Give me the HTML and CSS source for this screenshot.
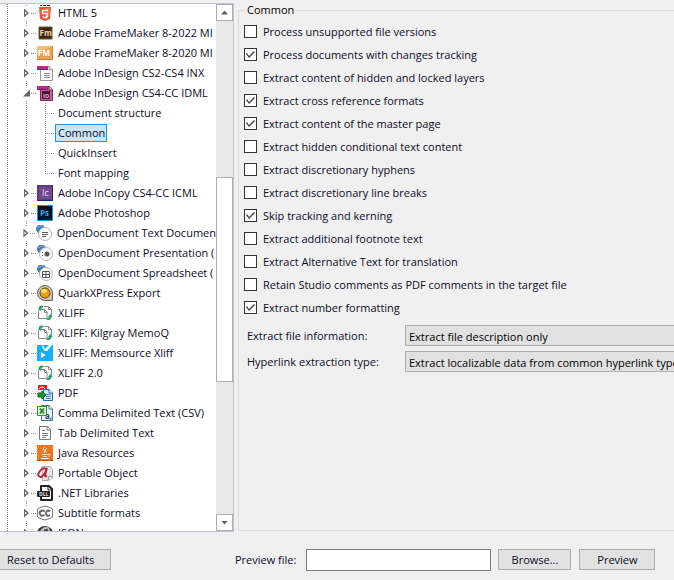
FILE: index.html
```html
<!DOCTYPE html>
<html lang="en">
<head>
<meta charset="utf-8">
<title>File types</title>
<link rel="stylesheet" href="styles.css">
</head>
<body>
<svg class="sprite" aria-hidden="true">
  <symbol id="xliff" viewBox="0 0 16 16">
    <path d="M7 1.500h4.500l3 3v6M11.500 1.500v3h3" fill="#fff" stroke="#888"/>
    <path d="M1.500 5.500v8h5M4.500 4.500h3l2.500 2.500v6.500H6M7.500 4.500v3H10" fill="none" stroke="#888"/>
    <path d="M2.500 4Q3 1 6 1.500M13.500 11.500q-.5 3-3.500 2.500" fill="none" stroke="#239a62" stroke-width="2"/>
    <path d="M1 3.500h4.500L3 6zM11 12l4.500 0-2-3z" fill="#239a62"/>
  </symbol>
  <symbol id="odf" viewBox="0 0 16 16">
    <circle cx="4.500" cy="4" r="4.500" fill="#3f7cba"/>
    <path d="M1 3q3-3 6-2" stroke="#86b0d9" fill="none"/>
    <circle cx="9" cy="9" r="6.500" fill="#fafafa" stroke="#b5b5b5"/>
  </symbol>
</svg>
<main class="workspace">
  <nav class="panel" aria-label="File types">
    <ul class="tree">
      <li><div class="row"><button class="toggle" aria-label="Expand"></button><svg class="icon" viewBox="0 0 16 16"><path d="M3 0h2v1H3zM6 0h3v1H6zM10 0h3v1h-3z" fill="#222"/><path d="M2 2h12l-1 12-5 2-5-2z" fill="#e5532d"/><path d="M8 3h5l-1 10-4 1z" fill="#f17843"/><path d="M11 5.500H5.500v3h5L10 12l-2 .7-2.500-.8" fill="none" stroke="#fff" stroke-width="1.500"/></svg><a href="#html">HTML 5</a></div></li>
      <li><div class="row"><button class="toggle" aria-label="Expand"></button><svg class="icon" viewBox="0 0 16 16"><path d="M2 2h13v12H2z" fill="#3c2815" stroke="#6e5529"/><text x="2.500" y="11" font-size="8" font-weight="bold" fill="#eed7a5">Fm</text></svg><a href="#fm22">Adobe FrameMaker 8-2022 MI</a></div></li>
      <li><div class="row"><button class="toggle" aria-label="Expand"></button><svg class="icon" viewBox="0 0 16 16"><path d="M0 1h15v14H0z" fill="#eaa14e"/><path d="M0 1h15L0 10z" fill="#f2bd75"/><path d="M0 14.500h15.500V1" stroke="#c9853a" fill="none"/><text x="1" y="11" font-size="8" font-weight="bold" fill="#fff">FM</text></svg><a href="#fm20">Adobe FrameMaker 8-2020 MI</a></div></li>
      <li><div class="row"><button class="toggle" aria-label="Expand"></button><svg class="icon" viewBox="0 0 16 16"><path d="M3.500 1.500h9l3 3v11h-12z" fill="#fafafa" stroke="#999"/><path d="M12 1v4h4" fill="#ddd" stroke="#999"/><path d="M0 1h11v4H0z" fill="#b42e87"/><path d="M0 4h11v1H0z" fill="#7d195b"/><path d="M7 8.500h6M7 10.500h6M7 12.500h6" stroke="#888"/></svg><a href="#inx">Adobe InDesign CS2-CS4 INX</a></div></li>
      <li class="open"><div class="row"><button class="toggle expanded" aria-label="Collapse"></button><svg class="icon" viewBox="0 0 16 16"><path d="M3.500 1.500h9l3 3v11h-12z" fill="#c868a2" stroke="#7a2458"/><path d="M12 1v4h4" fill="#edbdd9" stroke="#7a2458"/><path d="M0 1h11v4H0z" fill="#b42e87"/><path d="M0 4h11v1H0z" fill="#7d195b"/><path d="M5 6h8v8H5z" fill="#461335"/><text x="6" y="12.500" font-size="6" font-weight="bold" fill="#f2a8d6">ID</text></svg><a href="#idml">Adobe InDesign CS4-CC IDML</a></div>
        <ul class="branch">
          <li><a href="#structure">Document structure</a></li>
          <li><a href="#common" class="selected" aria-current="page">Common</a></li>
          <li><a href="#quick">QuickInsert</a></li>
          <li><a href="#fonts">Font mapping</a></li>
        </ul>
      </li>
      <li><div class="row"><button class="toggle" aria-label="Expand"></button><svg class="icon" viewBox="0 0 16 16"><path d="M0 0h16v16H0z" fill="#5d3b79"/><path d="M2 2h13v12H2z" fill="#70498e"/><path d="M0 15.500h15.500V0" stroke="#382150" fill="none"/><text x="5" y="11" font-size="9" fill="#ead9f8">Ic</text></svg><a href="#icml">Adobe InCopy CS4-CC ICML</a></div></li>
      <li><div class="row"><button class="toggle" aria-label="Expand"></button><svg class="icon" viewBox="0 0 16 16"><path d="M.500.500h15v15H.500z" fill="#06121d" stroke="#0c9ce5"/><text x="3" y="11" font-size="8" font-weight="bold" fill="#18aef5">Ps</text></svg><a href="#psd">Adobe Photoshop</a></div></li>
      <li><div class="row"><button class="toggle" aria-label="Expand"></button><svg class="icon" viewBox="0 0 16 16"><use href="#odf"/><path d="M6 7.500h6M6 9.500h6M6 11.500h4" stroke="#555"/></svg><a href="#odt">OpenDocument Text Documen</a></div></li>
      <li><div class="row"><button class="toggle" aria-label="Expand"></button><svg class="icon" viewBox="0 0 16 16"><use href="#odf"/><path d="M5 7h1v1H5zM5 10h1v1H5z" fill="#555"/><circle cx="10" cy="9" r="2.500" fill="#555"/></svg><a href="#odp">OpenDocument Presentation (</a></div></li>
      <li><div class="row"><button class="toggle" aria-label="Expand"></button><svg class="icon" viewBox="0 0 16 16"><use href="#odf"/><path d="M5.500 6.500h7v6h-7zM9 6.500v6M5.500 9.500h7" fill="none" stroke="#555"/></svg><a href="#ods">OpenDocument Spreadsheet (</a></div></li>
      <li><div class="row"><button class="toggle" aria-label="Expand"></button><svg class="icon" viewBox="0 0 16 16"><path d="M8 .500a7.500 7.500 0 1 0 0 15h7.500V8A7.500 7.500 0 0 0 8 .500z" fill="#c9c5bd" stroke="#68645d"/><circle cx="8" cy="8" r="5" fill="#ed9e08" stroke="#6d4c17"/><ellipse cx="7" cy="6" rx="3" ry="2" fill="#ffdf72"/></svg><a href="#quark">QuarkXPress Export</a></div></li>
      <li><div class="row"><button class="toggle" aria-label="Expand"></button><svg class="icon"><use href="#xliff"/></svg><a href="#xliff1">XLIFF</a></div></li>
      <li><div class="row"><button class="toggle" aria-label="Expand"></button><svg class="icon"><use href="#xliff"/></svg><a href="#memoq">XLIFF: Kilgray MemoQ</a></div></li>
      <li><div class="row"><button class="toggle" aria-label="Expand"></button><svg class="icon" viewBox="0 0 16 16"><path d="M0 0h16v16H0z" fill="#18aeff"/><path d="M6 0l2 4 4-4h3l-5 6-2 0L5 2zM4 7l4.500 3L4 13z" fill="#fff"/></svg><a href="#memsource">XLIFF: Memsource Xliff</a></div></li>
      <li><div class="row"><button class="toggle" aria-label="Expand"></button><svg class="icon"><use href="#xliff"/></svg><a href="#xliff2">XLIFF 2.0</a></div></li>
      <li><div class="row"><button class="toggle" aria-label="Expand"></button><svg class="icon" viewBox="0 0 16 16"><path d="M1 0h9v5H1z" fill="#e3201b"/><path d="M2 4q3-4 6 0" stroke="#fff" fill="none"/><path d="M6.500 4.500h6l3 3v8h-9z" fill="#d6e7fb" stroke="#2967ad"/><path d="M12 4v4h4" fill="#fff" stroke="#2967ad"/><path d="M9 9.500h5M9 11.500h5M9 13.500h5" stroke="#4c86c7"/><path d="M1 8h4V6l4 4-4 4v-2H1z" fill="#169b2d" stroke="#07631a"/></svg><a href="#pdf">PDF</a></div></li>
      <li><div class="row"><button class="toggle" aria-label="Expand"></button><svg class="icon" viewBox="0 0 16 16"><path d="M4.500.500h8l3 3v12h-11z" fill="#eaf2fa" stroke="#477198"/><path d="M12 0v4h4" fill="#fff" stroke="#477198"/><path d="M.500 1.500h9v9h-9z" fill="#e7f6de" stroke="#37923b"/><path d="M3 3.500l4 5M7 3.500l-4 5" stroke="#25872d" stroke-width="2"/><text x="8" y="14" font-size="8" font-weight="bold" fill="#23436b">a,</text></svg><a href="#csv">Comma Delimited Text (CSV)</a></div></li>
      <li><div class="row"><button class="toggle" aria-label="Expand"></button><svg class="icon" viewBox="0 0 16 16"><path d="M2.500 1.500h8l3 3v10h-11z" fill="#fff" stroke="#777"/><path d="M10 1.500v3.500h4M5 5.500h3M5 8.500h6M5 10.500h6M5 12.500h4" fill="none" stroke="#777"/></svg><a href="#tab">Tab Delimited Text</a></div></li>
      <li><div class="row"><button class="toggle" aria-label="Expand"></button><svg class="icon" viewBox="0 0 16 16"><path d="M0 0h16v16H0z" fill="#ed7624"/><path d="M0 15.500h16" stroke="#bd5415"/><path d="M8 2q-3 2-1 3t0 3M10 3Q7 5 9 7M5 9.500h6M6 11.500h4M4 13.500h8M11 9.500q3-1 1 2" stroke="#ffe9d5" fill="none"/></svg><a href="#java">Java Resources</a></div></li>
      <li><div class="row"><button class="toggle" aria-label="Expand"></button><svg class="icon" viewBox="0 0 16 16"><path d="M5 1.500h8l2.500 3v8l-4 3h-6z" fill="#e6e6e6" stroke="#aaa"/><path d="M11 15l1-4 3 1" fill="#fff" stroke="#888"/><path d="M9 4Q6 2 3 6t-1 5q2 3 6-3L10 3 8 10q0 2 2 1" fill="none" stroke="#ba2338" stroke-width="2"/></svg><a href="#po">Portable Object</a></div></li>
      <li><div class="row"><button class="toggle" aria-label="Expand"></button><svg class="icon" viewBox="0 0 16 16"><path d="M4 1h8l3 3v11H4z" fill="#fff" stroke="#222" stroke-width="2" stroke-linejoin="round"/><path d="M11 1v4h4" fill="none" stroke="#222"/><rect y="6" width="13" height="6" rx="1" fill="#222"/><text x="2" y="11" font-size="5" font-weight="bold" fill="#ddd">DLL</text></svg><a href="#net">.NET Libraries</a></div></li>
      <li><div class="row"><button class="toggle" aria-label="Expand"></button><svg class="icon" viewBox="0 0 16 16"><path d="M3 2.500L8 1l5 1.500 2.500 1.500v8L13 13.500 8 15l-5-1.500L.500 12V4z" fill="#fff" stroke="#777"/><path d="M7.500 6.500Q6 5 4 6t-1 3q1 3 4.500 1M13 6.500q-1.500-1.500-3-.500t-1 3q1 3 4 1" stroke="#666" stroke-width="2" fill="none"/></svg><a href="#sub">Subtitle formats</a></div></li>
      <li><div class="row"><button class="toggle" aria-label="Expand"></button><svg class="icon" viewBox="0 0 16 16"><circle cx="8" cy="9" r="8" fill="#333"/><path d="M4 10q-1-5 3-6.500Q4 8 8 12t4-4-4-4" fill="none" stroke="#bbb" stroke-width="2"/></svg><a href="#json">JSON</a></div></li>
    </ul>
    <div class="scrollbar">
      <button class="arrow up" aria-label="Scroll up"></button>
      <div class="track"><div class="thumb"></div></div>
      <button class="arrow down" aria-label="Scroll down"></button>
    </div>
  </nav>
  <fieldset class="options">
    <legend>Common</legend>
    <label class="check"><input type="checkbox">Process unsupported file versions</label>
    <label class="check"><input type="checkbox" checked>Process documents with changes tracking</label>
    <label class="check"><input type="checkbox">Extract content of hidden and locked layers</label>
    <label class="check"><input type="checkbox" checked>Extract cross reference formats</label>
    <label class="check"><input type="checkbox" checked>Extract content of the master page</label>
    <label class="check"><input type="checkbox">Extract hidden conditional text content</label>
    <label class="check"><input type="checkbox">Extract discretionary hyphens</label>
    <label class="check"><input type="checkbox">Extract discretionary line breaks</label>
    <label class="check"><input type="checkbox" checked>Skip tracking and kerning</label>
    <label class="check"><input type="checkbox">Extract additional footnote text</label>
    <label class="check"><input type="checkbox">Extract Alternative Text for translation</label>
    <label class="check"><input type="checkbox">Retain Studio comments as PDF comments in the target file</label>
    <label class="check"><input type="checkbox" checked>Extract number formatting</label>
    <div class="fields">
      <label for="info">Extract file information:</label>
      <select id="info"><option>Extract file description only</option></select>
      <label for="links">Hyperlink extraction type:</label>
      <select id="links"><option>Extract localizable data from common hyperlink type</option></select>
    </div>
  </fieldset>
</main>
<footer class="actions">
  <button class="button reset">Reset to Defaults</button>
  <label for="file">Preview file:</label>
  <input id="file" class="file" type="text">
  <button class="button browse">Browse...</button>
  <button class="button preview">Preview</button>
</footer>
</body>
</html>
```
FILE: styles.css
```css
* { box-sizing: border-box; }

body {
  margin: 0;
  height: 100vh;
  display: flex;
  flex-direction: column;
  overflow: hidden;
  background: #f0f0f0;
  color: #0c0c24;
  font: 11px/16px "Open Sans", "Noto Sans", sans-serif;
}

button, input, select { font: inherit; color: inherit; margin: 0; }
a { color: inherit; text-decoration: none; }
.sprite { display: none; }

.workspace {
  flex: 1;
  min-height: 0;
  display: grid;
  grid-template-columns: 234px 1fr;
  grid-template-rows: minmax(0, 1fr);
  gap: 4px;
  padding-top: 3px;
}

.panel {
  display: flex;
  min-height: 0;
  overflow: hidden;
  background: #fff;
  border: 1px solid #bcc7d3;
  border-left: 0;
}

.tree, .branch { list-style: none; margin: 0; padding: 0; }

.tree {
  flex: 1;
  min-width: 0;
  align-self: flex-start;
  margin: -1px 0 0 7px;
  border-left: 1px dotted #808080;
}

.tree > li {
  padding-left: 14px;
  background: repeating-linear-gradient(#909090 0 1px, transparent 1px 2px) 18px 0 / 1px 100% no-repeat;
}

.row { display: flex; align-items: center; height: 20px; }

.row a {
  flex: 1;
  margin-left: 5px;
  white-space: nowrap;
}

.toggle {
  display: flex;
  justify-content: center;
  width: 9px;
  height: 14px;
  padding: 0;
  border: 0;
  align-items: center;
  background: #fff;
}

.toggle::before {
  content: "";
  width: 5px;
  height: 9px;
  background: #666;
  clip-path: polygon(0 0, 100% 50%, 0 100%, 0 0, 1px 3px, 1px 6px, 3px 50%, 1px 3px);
}

.toggle.expanded::before {
  width: 7px;
  height: 7px;
  background: #666;
  clip-path: polygon(100% 0, 100% 100%, 0 100%);
}

.icon {
  flex: none;
  width: 22px;
  height: 16px;
  padding-left: 6px;
  background: repeating-linear-gradient(90deg, #909090 0 1px, transparent 1px 2px) 0 8px / 6px 1px no-repeat;
}

.branch li {
  display: flex;
  align-items: center;
  height: 20px;
  margin-left: 23px;
  padding-left: 10px;
  background:
    repeating-linear-gradient(#909090 0 1px, transparent 1px 2px) 0 0 / 1px 100% no-repeat,
    repeating-linear-gradient(90deg, #909090 0 1px, transparent 1px 2px) 0 10px / 9px 1px no-repeat;
}

.branch li:last-child { background-size: 1px 50%, 9px 1px; }
.branch a { padding: 0 1px 0 2px; border: 1px solid transparent; }
.branch .selected { background: #cce4f7; border-color: #2a8dd4; }

.scrollbar {
  position: relative;
  display: flex;
  flex-direction: column;
  width: 17px;
  background: #e9e9e9;
}

.arrow {
  display: grid;
  place-items: center;
  height: 17px;
  padding: 0;
  background: #fff;
  border: 1px solid #acacac;
}

.arrow::before {
  content: "";
  width: 7px;
  height: 4px;
  background: #606060;
  clip-path: polygon(0 0, 100% 0, 50% 100%);
}

.up::before { clip-path: polygon(0 100%, 100% 100%, 50% 0); }

.track { flex: 1; display: grid; grid-template-rows: 156fr 205fr 132fr; }
.thumb { grid-row: 2; background: #fff; border: 1px solid #acacac; }

.options {
  min-width: 0;
  margin: 0 0 1px;
  padding: 3px 0 0 5px;
  border: 1px solid #dcdcdc;
  border-right: 0;
}

.options legend { margin-left: 1px; padding: 0 2px; line-height: 14px; color: #000; }

.check { display: flex; align-items: center; gap: 6px; height: 23px; }

.check input {
  appearance: none;
  display: grid;
  place-items: center;
  width: 13px;
  height: 13px;
  background: #fff;
  border: 1px solid #333;
}

.check input:checked::before {
  content: "";
  width: 11px;
  height: 11px;
  background: #444;
  clip-path: polygon(1px 5px, 2px 4px, 4px 7px, 9px 2px, 10px 3px, 4px 9px);
}

.fields {
  display: grid;
  grid-template-columns: 155px 1fr;
  align-items: center;
  gap: 5px 3px;
  margin: 6px 0 0 3px;
}

.fields select {
  appearance: none;
  min-width: 0;
  height: 21px;
  padding: 2px 0 0 3px;
  background: #e1e1e1;
  border: 1px solid #adadad;
  border-right: 0;
  border-radius: 0;
  color: #000;
}

.actions {
  display: flex;
  align-items: flex-start;
  height: 48px;
  padding-top: 17px;
}

.button {
  height: 21px;
  padding: 0;
  background: #e1e1e1;
  border: 1px solid #adadad;
}

.actions label { margin: 3px 10px 0 124px; }
.reset { width: 111px; padding: 0 8px 0 7px; border-left: 0; text-align: left; }
.file { width: 185px; height: 22px; background: #fff; border: 1px solid #7a7a7a; }
.browse { width: 73px; margin-left: 7px; }
.preview { width: 76px; margin-left: 8px; }
```
